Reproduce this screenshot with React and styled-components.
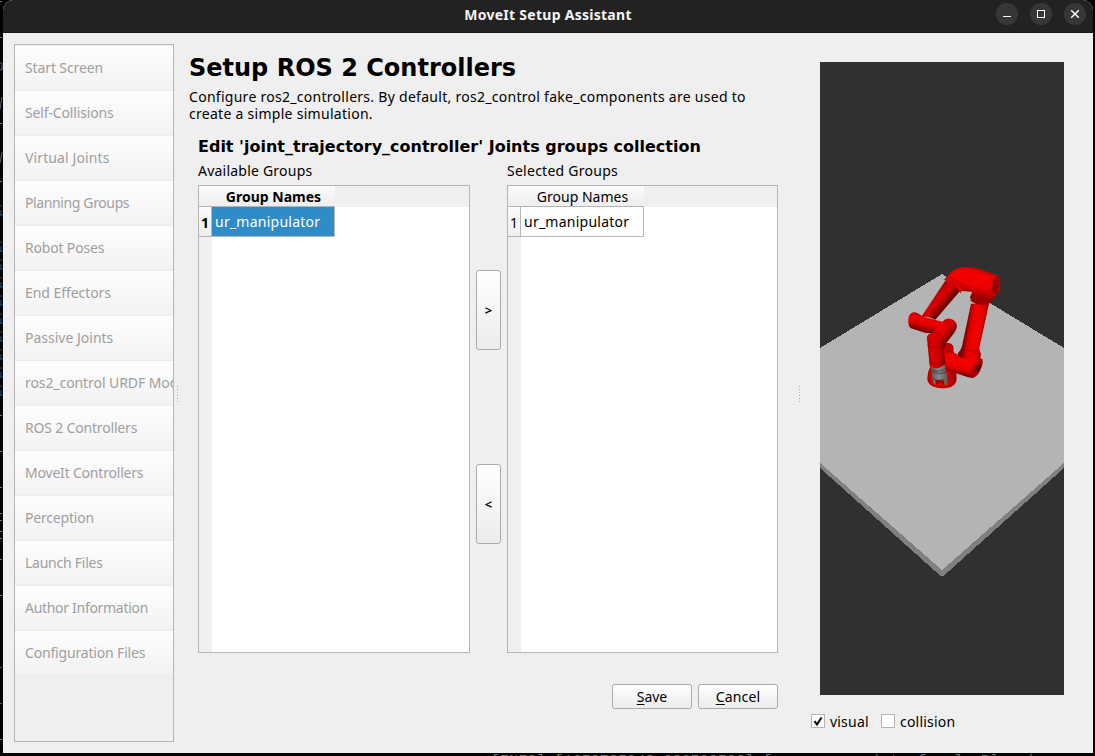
import React from "react";
import styled, { createGlobalStyle } from "styled-components";

const Global = createGlobalStyle`
  * { box-sizing: border-box; }
  body { margin: 0; background: #000; overflow: hidden; }
  button { font: inherit; color: inherit; padding: 0; }
`;

const Desktop = styled.div`
  width: 1095px;
  height: 756px;
  display: grid;
  grid-template-columns: 3px 1090px 2px;
  grid-template-rows: 753px 3px;
  background: #000;
  overflow: hidden;
  font-family: "Noto Sans", sans-serif;
  font-size: 14px;
  color: #000;
`;

const Window = styled.div`
  display: flex;
  flex-direction: column;
  background: #efefef;
  border-radius: 10px 10px 0 0;
  overflow: hidden;
`;

const TitleBar = styled.header`
  height: 33px;
  flex: none;
  display: grid;
  grid-template-columns: 1fr auto 1fr;
  align-items: start;
  background: #222;
  border-bottom: 1px solid #171717;
  color: #f4f4f4;
`;

const WindowTitle = styled.div`
  grid-column: 2;
  line-height: 20px;
  padding-top: 5px;
  font-weight: 700;
  white-space: nowrap;
  letter-spacing: ${(p) => p.$track}px;
`;

const WindowButtons = styled.div`
  display: flex;
  justify-content: flex-end;
  gap: 12px;
  padding: 3px 7px 0 0;
`;

const WindowButton = styled.button`
  width: 22px;
  height: 22px;
  border: 0;
  border-radius: 50%;
  background: #373737;
  display: block;
  svg { display: block; }
`;

const Body = styled.div`
  flex: 1;
  display: flex;
  padding: 11px 11px 11px 11px;
`;

const Sidebar = styled.nav`
  width: 160px;
  height: 698px;
  flex: none;
  border: 1px solid #b5b5b5;
  padding-top: 1px;
  overflow: hidden;
`;

const NavItem = styled.div`
  height: 45px;
  padding-left: 10px;
  line-height: 44px;
  white-space: nowrap;
  color: #9f9f9f;
  background: linear-gradient(#fefefe, #f2f2f2);
  border-bottom: 1px solid #ececec;
  letter-spacing: ${(p) => p.$track || 0}px;
`;

const Splitter = styled.div`
  width: ${(p) => p.$width}px;
  flex: none;
  display: flex;
  align-items: center;
  padding: 2px 0 0 ${(p) => p.$inset}px;
`;

const Main = styled.main`
  width: 589px;
  flex: none;
  padding-top: 8px;
`;

const Heading = styled.h1`
  margin: 0;
  font: 700 24px/32px "DejaVu Sans", sans-serif;
  white-space: nowrap;
`;

const Description = styled.p`
  margin: 4px 0 0;
  line-height: 17px;
  letter-spacing: ${(p) => p.$track}px;
  white-space: nowrap;
`;

const Editor = styled.section`
  padding-left: 9px;
`;

const SubHeading = styled.h2`
  margin: 15px 0 0;
  font: 700 16px/20px "DejaVu Sans", sans-serif;
  white-space: nowrap;
`;

const Transfer = styled.div`
  display: flex;
  margin-top: 4px;
`;

const GroupColumn = styled.div`
  width: ${(p) => p.$width}px;
`;

const GroupLabel = styled.div`
  height: 24px;
  line-height: 20px;
  white-space: nowrap;
  letter-spacing: ${(p) => p.$track || 0}px;
`;

const Table = styled.div`
  height: 468px;
  border: 1px solid #b5b5b5;
  background: linear-gradient(90deg, #efefef 13px, #fff 13px);
`;

const TableHeader = styled.div`
  height: 21px;
  background: #efefef;
`;

const HeaderCell = styled.div`
  width: 136px;
  height: 21px;
  padding-left: 13px;
  line-height: 22px;
  text-align: center;
  background: linear-gradient(#fbfbfb, #eee);
  border-bottom: 1px solid #b5b5b5;
  font-weight: ${(p) => (p.$active ? 700 : 400)};
`;

const Row = styled.div`
  display: flex;
  height: 30px;
`;

const RowNumber = styled.div`
  width: 13px;
  border-right: 1px solid #b5b5b5;
  border-bottom: 1px solid #b5b5b5;
  background: linear-gradient(#fbfbfb, #eee);
  line-height: 32px;
  text-align: center;
  font-weight: ${(p) => (p.$active ? 700 : 400)};
`;

const Cell = styled.div`
  width: 123px;
  padding-left: 3px;
  border-right: 1px solid #b9b9b9;
  border-bottom: 1px solid #b9b9b9;
  line-height: 29px;
  background: ${(p) => (p.$active ? "#308cc6" : "#fff")};
  color: ${(p) => (p.$active ? "#fff" : "#000")};
  letter-spacing: 0.24px;
`;

const Movers = styled.div`
  width: 37px;
  display: flex;
  flex-direction: column;
  align-items: center;
  gap: 114px;
  padding-top: 109px;
`;

const Button = styled.button`
  width: ${(p) => p.$w}px;
  height: ${(p) => p.$h}px;
  font-size: ${(p) => p.$size || 14}px;
  font-weight: ${(p) => p.$weight || 400};
  border: 1px solid #ababab;
  border-radius: 3px;
  background: linear-gradient(#fff, #ececec);
  letter-spacing: ${(p) => p.$track || 0}px;
  u { text-underline-offset: 2px; text-decoration-thickness: 1px; }
`;

const Actions = styled.div`
  display: flex;
  justify-content: flex-end;
  gap: 6px;
  margin-top: 31px;
`;

const Preview = styled.aside`
  width: 265px;
  flex: none;
  padding-top: 18px;
`;

const Scene = styled.svg`
  display: block;
  width: 244px;
  height: 633px;
  margin-left: 9px;
  background: #303030;
`;

const Options = styled.div`
  display: flex;
  padding-top: 17px;
`;

const Option = styled.label`
  display: flex;
  gap: 5px;
  width: 70px;
  line-height: 20px;
  letter-spacing: 0.2px;
`;

const Box = styled.span`
  width: 14px;
  height: 14px;
  margin-top: 2px;
  flex: none;
  border: 1px solid #b5b5b5;
  background: #fff;
  svg { display: block; }
`;

const TerminalEdge = styled.svg`
  display: block;
  width: 3px;
  height: 753px;
`;

const TerminalLine = styled.div`
  grid-column: 1 / -1;
  height: 3px;
  overflow: hidden;
  padding-left: 491px;
  font: 15px/17px "Liberation Mono", monospace;
  letter-spacing: 0.07px;
  color: #6b7476;
  white-space: pre;
`;

const steps = [
  ["Start Screen", -0.12],
  ["Self-Collisions", -0.15],
  ["Virtual Joints", 0.12],
  ["Planning Groups", -0.38],
  ["Robot Poses", -0.18],
  ["End Effectors", -0.06],
  ["Passive Joints", 0],
  ["ros2_control URDF Modifications", -0.08],
  ["ROS 2 Controllers", -0.18],
  ["MoveIt Controllers", -0.2],
  ["Perception", -0.2],
  ["Launch Files", -0.25],
  ["Author Information", -0.3],
  ["Configuration Files", -0.17],
];

const dashes = [1, 37, 123, 181, 415, 451, 487, 513, 520, 531, 538, 559, 595, 667, 703, 739];
const letters = [210, 246, 264, 282, 300, 318, 336, 354, 372, 390];

function Grip() {
  return (
    <svg width="3" height="17">
      {[0, 3, 6, 9, 12, 15].map((y) => <rect key={y} x="0" y={y} width="1" height="1" fill="#aaa" />)}
    </svg>
  );
}

function GroupTable({ active }) {
  return (
    <Table>
      <TableHeader><HeaderCell $active={active}>Group Names</HeaderCell></TableHeader>
      <Row>
        <RowNumber $active={active}>1</RowNumber>
        <Cell $active={active}>ur_manipulator</Cell>
      </Row>
    </Table>
  );
}

function RobotScene() {
  return (
    <Scene viewBox="0 0 244 633">
      <defs>
        <linearGradient id="upper" gradientUnits="userSpaceOnUse" x1="228" y1="215" x2="284" y2="224">
          <stop offset="0" stopColor="#7d0000" /><stop offset=".22" stopColor="#d80000" />
          <stop offset=".5" stopColor="#f80000" /><stop offset=".8" stopColor="#e00000" /><stop offset="1" stopColor="#a00000" />
        </linearGradient>
        <linearGradient id="fore" gradientUnits="userSpaceOnUse" x1="130" y1="120" x2="168" y2="153">
          <stop offset="0" stopColor="#900000" /><stop offset=".25" stopColor="#d60000" />
          <stop offset=".55" stopColor="#cf0000" /><stop offset="1" stopColor="#5c0000" />
        </linearGradient>
        <linearGradient id="elbow" gradientUnits="userSpaceOnUse" x1="260" y1="40" x2="240" y2="120">
          <stop offset="0" stopColor="#c40000" /><stop offset=".2" stopColor="#f40000" />
          <stop offset=".6" stopColor="#f00000" /><stop offset="1" stopColor="#980000" />
        </linearGradient>
        <linearGradient id="wrist" gradientUnits="userSpaceOnUse" x1="118" y1="182" x2="108" y2="228">
          <stop offset="0" stopColor="#d00000" /><stop offset=".35" stopColor="#f00000" />
          <stop offset=".65" stopColor="#e00000" /><stop offset="1" stopColor="#7a0000" />
        </linearGradient>
        <linearGradient id="wristTwo" gradientUnits="userSpaceOnUse" x1="145" y1="220" x2="182" y2="248">
          <stop offset="0" stopColor="#ed0000" /><stop offset=".5" stopColor="#dc0000" /><stop offset="1" stopColor="#650000" />
        </linearGradient>
        <linearGradient id="tool" gradientUnits="userSpaceOnUse" x1="112" y1="290" x2="166" y2="288">
          <stop offset="0" stopColor="#a00000" /><stop offset=".25" stopColor="#df0000" />
          <stop offset=".65" stopColor="#c90000" /><stop offset="1" stopColor="#780000" />
        </linearGradient>
        <linearGradient id="shoulder" gradientUnits="userSpaceOnUse" x1="220" y1="290" x2="205" y2="362">
          <stop offset="0" stopColor="#dd0000" /><stop offset=".45" stopColor="#f60000" />
          <stop offset=".72" stopColor="#e00000" /><stop offset="1" stopColor="#680000" />
        </linearGradient>
        <linearGradient id="base" gradientUnits="userSpaceOnUse" x1="112" y1="360" x2="200" y2="360">
          <stop offset="0" stopColor="#b00000" /><stop offset=".2" stopColor="#e20000" />
          <stop offset=".7" stopColor="#d40000" /><stop offset="1" stopColor="#940000" />
        </linearGradient>
        <linearGradient id="grip" x1="0" y1="0" x2="1" y2="0">
          <stop offset="0" stopColor="#555" /><stop offset=".5" stopColor="#8b8b8b" /><stop offset="1" stopColor="#5a5a5a" />
        </linearGradient>
      </defs>
      <g shapeRendering="crispEdges">
        <path d="M0 400L122 507L244 400V406L124 513.5H120L0 406Z" fill="#808080" />
        <path d="M122 212L244 286V401L122 508L0 401V286Z" fill="#b4b4b4" />
      </g>
      <g transform="translate(70 193) scale(.33333)">
        <path d="M112 368Q113 350 121 334H191Q198 345 200 368Q200 394 172 399Q153 402 136 397Q112 390 112 368Z" fill="url(#base)" />
        <path d="M113 373Q117 392 143 396Q185 399 199 375" fill="none" stroke="#980000" strokeWidth="2" />
        <path d="M160 268Q180 257 190 275V291L205 300L266 306Q280 312 277 328L266 354L248 369L232 366L160 342Z" fill="url(#shoulder)" />
        <path d="M160 268Q180 257 190 275V291Q176 288 160 295Z" fill="#c20000" />
        <path d="M169 292Q180 287 191 292" fill="none" stroke="#680000" strokeWidth="2" />
        <path d="M276 312Q280 330 264 357Q251 371 245 366Q239 359 251 336Q264 312 276 312Z" fill="#b00000" stroke="#730000" strokeWidth="1.5" />
        <path d="M271 324L254 349M273 331L260 352" stroke="#450000" strokeWidth="4" />
        <path d="M204 294Q213 286 216 274L243 146H297L268 278Q267 289 273 296L270 314Q236 322 204 303Z" fill="url(#upper)" />
        <path d="M216 277Q243 291 270 286M205 302Q213 286 235 286Q260 290 271 303" fill="none" stroke="#a80000" strokeWidth="2" />
        <path d="M229 303V300M239 304V301M246 303V300" stroke="#870000" strokeWidth="2" />
        <path d="M168 70Q186 42 216 37Q245 33 280 46L314 59Q330 64 330 87Q331 111 313 125L300 145Q281 154 257 146Q242 140 240 126L247 111L213 107L192 82Z" fill="url(#elbow)" />
        <path d="M241 127Q263 143 302 133M241 136Q265 153 301 143" fill="none" stroke="#970000" strokeWidth="2.5" />
        <path d="M249 113Q277 124 299 102L307 124" fill="none" stroke="#c20000" strokeWidth="3" />
        <ellipse cx="317" cy="91" rx="12" ry="30" transform="rotate(8 317 91)" fill="#9f0000" stroke="#e00000" strokeWidth="2" />
        <ellipse cx="319" cy="91" rx="6" ry="20" transform="rotate(8 319 91)" fill="none" stroke="#710000" strokeWidth="3" strokeDasharray="5 3" />
        <path d="M308 66L297 75M233 75L242 78M231 101L243 104" stroke="#a00000" strokeWidth="2" />
        <path d="M166 77Q192 82 210 108L136 194Q112 181 93 187Z" fill="url(#fore)" />
        <path d="M164 75Q165 65 181 67Q202 73 216 96L213 113L208 109Q190 84 164 75Z" fill="#e10000" stroke="#910000" strokeWidth="1.5" />
        <path d="M55 192Q56 177 69 172Q81 171 99 185L157 200L164 231L132 235L107 234L63 220Q53 213 55 192Z" fill="url(#wrist)" />
        <path d="M77 173Q84 175 82 186Q75 205 79 223" fill="none" stroke="#970000" strokeWidth="2" />
        <path d="M160 197Q170 188 184 192Q199 197 201 214Q200 223 193 233L166 268L160 284L148 240L132 231Z" fill="url(#wristTwo)" />
        <path d="M163 197Q185 200 190 222Q193 230 187 237" fill="none" stroke="#a00000" strokeWidth="3" />
        <path d="M111 250Q111 237 130 233Q151 231 157 248L167 334Q153 345 119 333Z" fill="url(#tool)" />
        <ellipse cx="134" cy="248" rx="22" ry="15" fill="#d60000" stroke="#a00000" strokeWidth="1.5" />
        <path d="M112 271Q129 285 160 272M118 318Q137 334 166 324" fill="none" stroke="#920000" strokeWidth="2" />
        <path d="M125 325L129 320M139 330L144 324M153 327L157 321" stroke="#760000" strokeWidth="2" />
        <path d="M123 335Q142 348 164 328L168 343L165 352H172V390H165L160 374L137 376V387H131L127 368L125 350Z" fill="url(#grip)" />
        <path d="M125 344Q143 356 168 340M129 352Q149 361 168 352M131 372Q142 381 162 373" fill="none" stroke="#3f3f3f" strokeWidth="2.5" />
        <path d="M137 377Q148 370 160 379V389L149 382L138 390Z" fill="#980000" />
      </g>
    </Scene>
  );
}

export default function App() {
  return (
    <>
      <Global />
      <Desktop>
        <TerminalEdge viewBox="0 0 3 753">
          {dashes.map((y) => <rect key={y} y={y} width="2" height="1" fill={y > 600 && y < 710 ? "#665d13" : "#777"} />)}
          {letters.map((y) => <path key={y} d={`M1 ${y - 5}v2M1 ${y}v5M0 ${y + 5}h3`} stroke="#27558a" fill="none" />)}
          <path d="M2 97L0 109M2 152L0 163M0 63h2v7H0" stroke="#53677f" fill="none" />
        </TerminalEdge>
        <Window>
          <TitleBar>
            <WindowTitle $track={0.27}>MoveIt Setup Assistant</WindowTitle>
            <WindowButtons>
              <WindowButton aria-label="Minimize">
                <svg width="22" height="22"><path d="M7 13.5h8" stroke="#fff" /></svg>
              </WindowButton>
              <WindowButton aria-label="Maximize">
                <svg width="22" height="22"><rect x="7.5" y="7.5" width="7" height="7" stroke="#fff" fill="none" /></svg>
              </WindowButton>
              <WindowButton aria-label="Close">
                <svg width="22" height="22"><path d="M7.2 7.2l7.6 7.6M14.8 7.2l-7.6 7.6" stroke="#fff" strokeWidth="1.4" /></svg>
              </WindowButton>
            </WindowButtons>
          </TitleBar>
          <Body>
            <Sidebar>
              {steps.map(([name, track]) => <NavItem key={name} $track={track}>{name}</NavItem>)}
            </Sidebar>
            <Splitter $width={15} $inset={3}><Grip /></Splitter>
            <Main>
              <Heading>Setup ROS 2 Controllers</Heading>
              <Description $track={0.28}>
                Configure ros2_controllers. By default, ros2_control fake_components are used to<br />
                create a simple simulation.
              </Description>
              <Editor>
                <SubHeading>Edit 'joint_trajectory_controller' Joints groups collection</SubHeading>
                <Transfer>
                  <GroupColumn $width={272}>
                    <GroupLabel $track={0.22}>Available Groups</GroupLabel>
                    <GroupTable active />
                  </GroupColumn>
                  <Movers>
                    <Button $w={25} $h={80} $size={13} $weight={600}>&gt;</Button>
                    <Button $w={25} $h={80} $size={13} $weight={600}>&lt;</Button>
                  </Movers>
                  <GroupColumn $width={271}>
                    <GroupLabel $track={0.26}>Selected Groups</GroupLabel>
                    <GroupTable />
                  </GroupColumn>
                </Transfer>
                <Actions>
                  <Button $w={80} $h={25}><u>S</u>ave</Button>
                  <Button $w={80} $h={25} $track={0.15}><u>C</u>ancel</Button>
                </Actions>
              </Editor>
            </Main>
            <Splitter $width={33} $inset={21}><Grip /></Splitter>
            <Preview>
              <RobotScene />
              <Options>
                <Option>
                  <Box><svg width="12" height="12"><path d="M2.5 6.2L5 9.5L9.5 2.5" fill="none" stroke="#000" strokeWidth="2" /></svg></Box>
                  visual
                </Option>
                <Option><Box />collision</Option>
              </Options>
            </Preview>
          </Body>
        </Window>
        <span />
        <TerminalLine>[INFO] [1659785948.686538536] [move_group_interface]: Planning request</TerminalLine>
      </Desktop>
    </>
  );
}
